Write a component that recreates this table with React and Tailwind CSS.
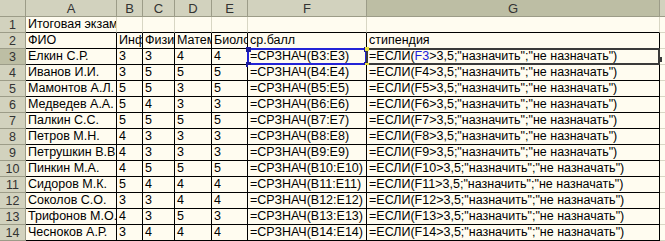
const cols = ['A', 'B', 'C', 'D', 'E', 'F', 'G'];
const widths = 'grid-cols-[26px_91px_26px_32px_37px_36px_119px_293px_5px]';

const students = [
  ['Елкин С.Р.', 3, 3, 4, 4],
  ['Иванов И.И.', 3, 5, 5, 5],
  ['Мамонтов А.Л.', 5, 5, 3, 5],
  ['Медведев А.А.', 5, 4, 3, 3],
  ['Палкин С.С.', 5, 5, 5, 5],
  ['Петров М.Н.', 4, 3, 3, 3],
  ['Петрушкин В.В.', 4, 3, 3, 3],
  ['Пинкин М.А.', 4, 5, 5, 5],
  ['Сидоров М.К.', 5, 4, 4, 4],
  ['Соколов С.О.', 3, 3, 4, 4],
  ['Трифонов М.О.', 4, 3, 5, 3],
  ['Чесноков А.Р.', 3, 4, 4, 4],
];

function Handle({ className }) {
  return <span className={`absolute w-[5px] h-[5px] bg-[#1a1aa0] ${className}`} />;
}

function Cell({ children, className = '' }) {
  return (
    <div className={`h-4 border-r border-b border-black bg-[#fffcf0] pl-[2px] leading-[15px] whitespace-nowrap overflow-hidden ${className}`}>
      {children}
    </div>
  );
}

export default function App() {
  return (
    <div className="w-[665px] h-[241px] overflow-hidden bg-[#fffcf0] text-[12.5px] text-black" style={{ fontFamily: '"Liberation Sans", Arial, sans-serif' }}>
      <div className={`grid ${widths}`}>
        {/* column headers */}
        <div className="h-[17px] bg-[#d2d2be] border-r border-b border-[#9c9c88]" />
        {cols.map((c) => (
          <div
            key={c}
            className={`h-[17px] border-r border-b border-[#9c9c88] text-center leading-[17px] text-[13px] text-[#333] ${
              c === 'G' ? 'bg-[#bdbea4]' : 'bg-[#d2d2be]'
            }`}
          >
            {c}
          </div>
        ))}
        <div className="h-[17px] bg-[#d2d2be] border-b border-[#9c9c88]" />

        {/* row 1 */}
        <div className="h-4 bg-[#d2d2be] border-r border-b border-[#9c9c88] text-center leading-4 text-[#333]">1</div>
        <div className="h-4 border-r border-b border-[#d8d6c4] border-b-black bg-[#fffcf0] pl-[2px] leading-[15px] whitespace-nowrap overflow-hidden">
          Итоговая экзаменационная ведомость
        </div>
        {cols.slice(1).map((c) => (
          <div key={c} className="h-4 border-r border-b border-[#d8d6c4] border-b-black bg-[#fffcf0]" />
        ))}
        <div className="h-4 border-b border-[#d8d6c4]" />

        {/* row 2 */}
        <div className="h-4 bg-[#d2d2be] border-r border-b border-[#9c9c88] text-center leading-4 text-[#333]">2</div>
        {['ФИО', 'Информатика', 'Физика', 'Математика', 'Биология', 'ср.балл', 'стипендия'].map((t) => (
          <Cell key={t}>{t}</Cell>
        ))}
        <div className="h-4 border-b border-[#d8d6c4]" />

        {/* data rows */}
        {students.map((s, i) => {
          const r = i + 3;
          const active = r === 3;
          return [
            <div
              key={`h${r}`}
              className={`h-4 border-r border-b border-[#9c9c88] text-center leading-4 text-[#333] ${
                active ? 'bg-[#bdbea4]' : 'bg-[#d2d2be]'
              }`}
            >
              {r}
            </div>,
            ...s.map((v, j) => <Cell key={`${r}-${j}`}>{v}</Cell>),
            <div key={`f${r}`} className="relative">
              <Cell>
                =СРЗНАЧ(B{r}:E{r})
              </Cell>
              {active && (
                <>
                  <div className="absolute -left-px -top-px right-0 bottom-0 border-2 border-[#2323d6]" />
                  <Handle className="-left-[2px] -top-[2px]" />
                  <Handle className="-right-[2px] -top-[2px]" />
                  <Handle className="-left-[2px] -bottom-[2px]" />
                  <Handle className="-right-[2px] -bottom-[2px]" />
                </>
              )}
            </div>,
            <div key={`g${r}`} className="relative">
              <Cell>
                =ЕСЛИ(
                {active ? <span className="text-[#1d1dd8]">F{r}</span> : `F${r}`}
                &gt;3,5;"назначить";"не назначать")
              </Cell>
              {active && (
                <>
                  <div className="absolute -left-px -top-px right-0 bottom-0 border-2 border-[#3a3a3a]" />
                  <span className="absolute -left-[2px] -top-[2px] w-[4px] h-[4px] bg-[#e8e040]" />
                  <span className="absolute -left-[2px] -bottom-[2px] w-[4px] h-[4px] bg-[#e8e040]" />
                  <span className="absolute -right-[2px] bottom-[3px] w-[4px] h-[5px] bg-[#3a3a3a]" />
                </>
              )}
            </div>,
            <div key={`x${r}`} className="h-4 border-b border-[#d8d6c4]" />,
          ];
        })}
      </div>
    </div>
  );
}
